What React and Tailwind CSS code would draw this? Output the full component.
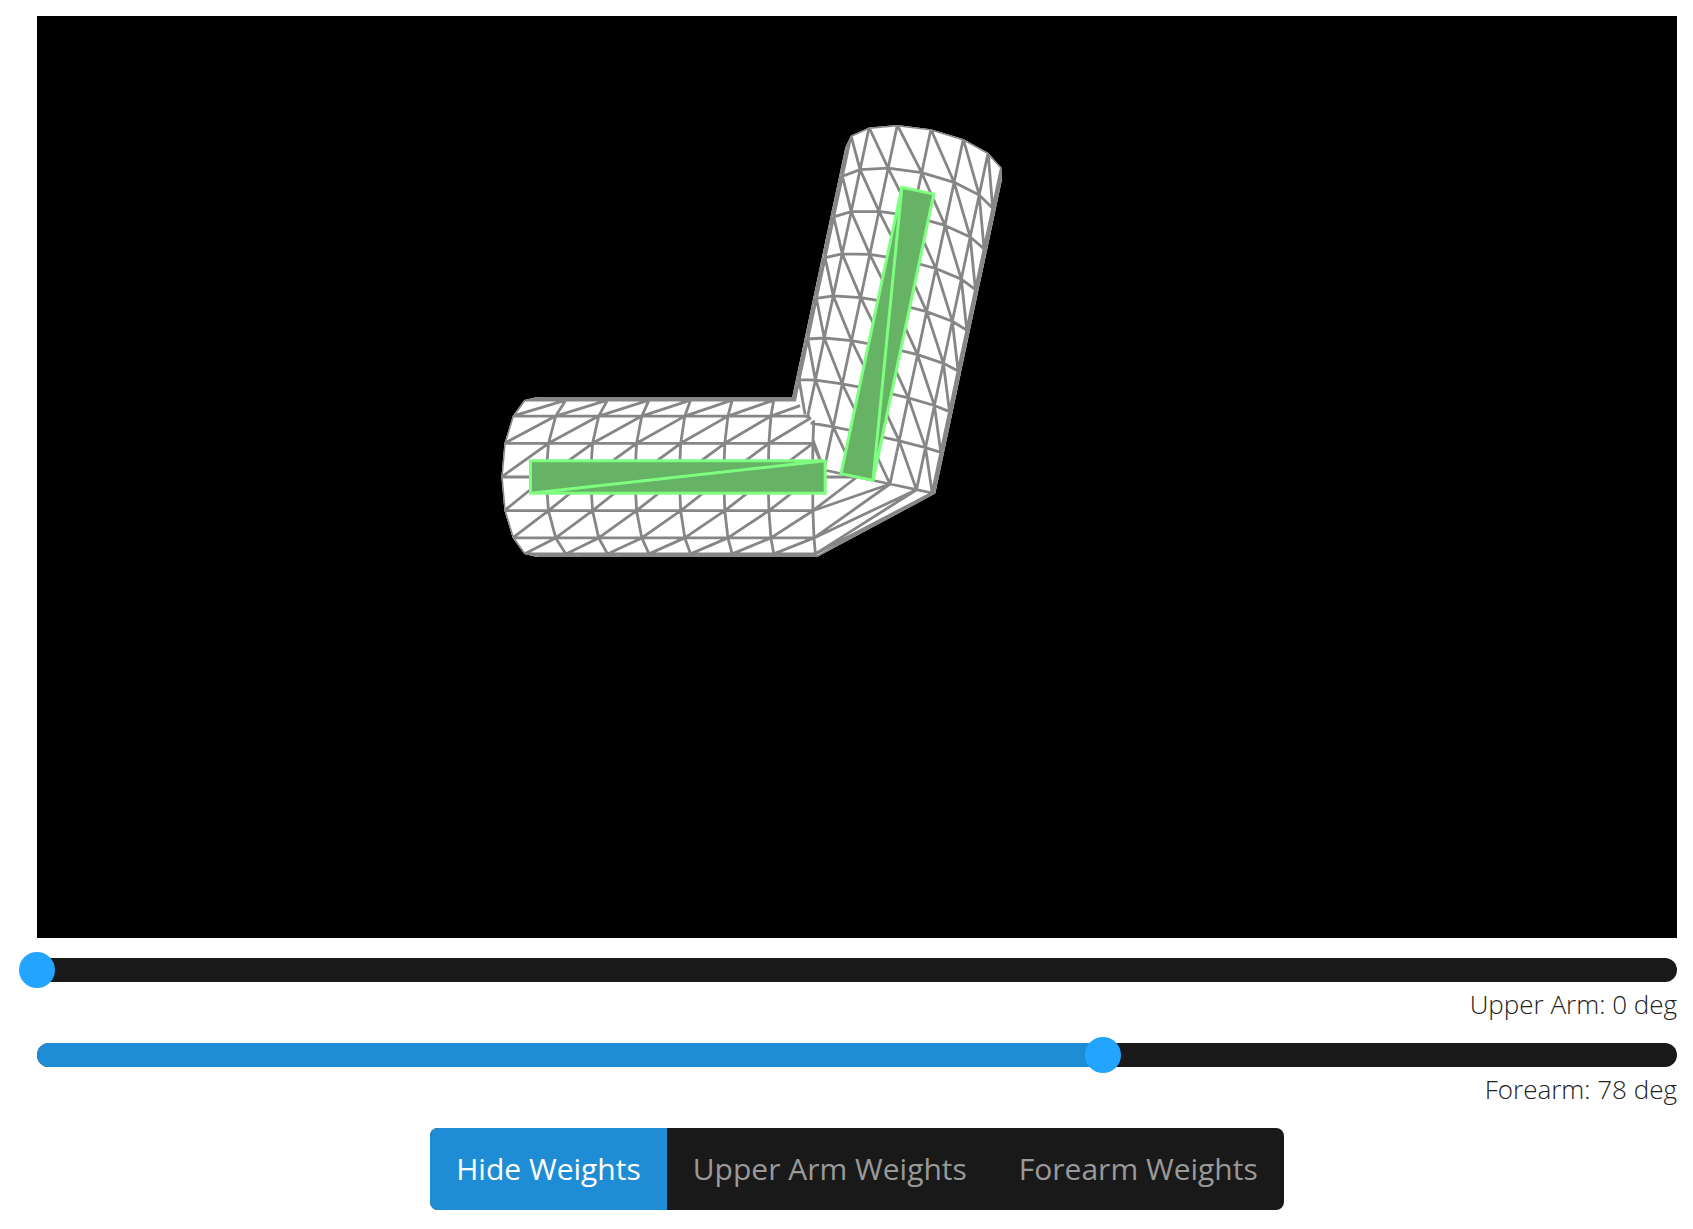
import { useId, useMemo, useState } from "react";

const RINGS = 16;
const SIDES = 16;
const RADIUS = 2;
const EYE = 20;
const VIEW_W = 1640;
const VIEW_H = 922;
const UNIT = 40;
const SAMPLES = 32;
const DEPTH_BIAS = 0.00012;

const rad = (deg) => (deg * Math.PI) / 180;

function rotate(x, y, deg) {
  const c = Math.cos(rad(deg));
  const s = Math.sin(rad(deg));
  return [x * c - y * s, x * s + y * c];
}

// Places a point of one bone's space in the scene.
function pose(bone, x, y, upper, forearm) {
  const [px, py] = bone === "forearm" ? rotate(x, y, forearm) : [x, y];
  const [qx, qy] = rotate(px + 8, py, upper);
  return [qx - 8, qy];
}

function project([x, y], z) {
  const w = 1 / (EYE - z);
  const k = UNIT * EYE * w;
  return { x: VIEW_W / 2 + x * k, y: VIEW_H / 2 - y * k, w };
}

function makeTriangle(a, b, c) {
  const area = (b.x - a.x) * (c.y - a.y) - (c.x - a.x) * (b.y - a.y);
  return {
    a,
    b,
    c,
    area,
    x0: Math.min(a.x, b.x, c.x),
    x1: Math.max(a.x, b.x, c.x),
    y0: Math.min(a.y, b.y, c.y),
    y1: Math.max(a.y, b.y, c.y),
  };
}

function hidden(x, y, w, triangles) {
  for (const t of triangles) {
    if (x < t.x0 || x > t.x1 || y < t.y0 || y > t.y1) continue;
    const { a, b, c } = t;
    const u = ((x - a.x) * (c.y - a.y) - (c.x - a.x) * (y - a.y)) / t.area;
    const v = ((b.x - a.x) * (y - a.y) - (x - a.x) * (b.y - a.y)) / t.area;
    if (u < 0 || v < 0 || u + v > 1) continue;
    if (a.w + u * (b.w - a.w) + v * (c.w - a.w) > w + DEPTH_BIAS) return true;
  }
  return false;
}

const pt = (x, y) => `${x.toFixed(1)} ${y.toFixed(1)}`;

function buildArm(upper, forearm) {
  const grid = [];
  for (let i = 0; i <= RINGS; i++) {
    const ring = [];
    for (let j = 0; j < SIDES; j++) {
      const angle = rad((j * 360) / SIDES);
      const bone = i >= 8 ? "forearm" : "upper";
      const place = pose(bone, i - 8, RADIUS * Math.sin(angle), upper, forearm);
      ring.push(project(place, RADIUS * Math.cos(angle)));
    }
    grid.push(ring);
  }

  const triangles = [];
  const edges = [];
  for (let i = 0; i <= RINGS; i++) {
    for (let j = 0; j < SIDES; j++) {
      const k = (j + 1) % SIDES;
      edges.push([grid[i][j], grid[i][k]]);
      if (i === RINGS) continue;
      edges.push([grid[i][j], grid[i + 1][j]], [grid[i][j], grid[i + 1][k]]);
      triangles.push(
        makeTriangle(grid[i][j], grid[i + 1][j], grid[i + 1][k]),
        makeTriangle(grid[i][j], grid[i + 1][k], grid[i][k])
      );
    }
  }
  const solid = triangles.filter((t) => Math.abs(t.area) > 0.01);

  let fill = "";
  for (const { a, b, c, area } of solid) {
    const [m, n] = area > 0 ? [b, c] : [c, b];
    fill += `M${pt(a.x, a.y)}L${pt(m.x, m.y)}L${pt(n.x, n.y)}Z`;
  }

  let wire = "";
  for (const [p, q] of edges) {
    let start = null;
    for (let s = 0; s <= SAMPLES; s++) {
      const drawn =
        s < SAMPLES &&
        !hidden(
          p.x + ((q.x - p.x) * (s + 0.5)) / SAMPLES,
          p.y + ((q.y - p.y) * (s + 0.5)) / SAMPLES,
          p.w + ((q.w - p.w) * (s + 0.5)) / SAMPLES,
          solid
        );
      if (drawn && start === null) start = s / SAMPLES;
      if (!drawn && start !== null) {
        const end = s / SAMPLES;
        wire += `M${pt(p.x + (q.x - p.x) * start, p.y + (q.y - p.y) * start)}`;
        wire += `L${pt(p.x + (q.x - p.x) * end, p.y + (q.y - p.y) * end)}`;
        start = null;
      }
    }
  }
  return { fill, wire };
}

function bonePath(bone, from, to, upper, forearm) {
  const h = 0.4;
  const corners = [
    [from, -h],
    [from, h],
    [to, h],
    [to, -h],
  ].map(([x, y]) => {
    const p = project(pose(bone, x, y, upper, forearm), h);
    return pt(p.x, p.y);
  });
  return `M${corners.join("L")}ZM${corners[0]}L${corners[2]}`;
}

function ArmView({ upper, forearm }) {
  const clip = useId();
  const { fill, wire } = useMemo(() => buildArm(upper, forearm), [upper, forearm]);
  return (
    <svg viewBox={`0 0 ${VIEW_W} ${VIEW_H}`} className="block h-full w-full" role="img" aria-label="Skinned arm">
      <clipPath id={clip}>
        <path d={fill} />
      </clipPath>
      <path d={fill} fill="#ffffff" />
      <path d={wire} fill="none" stroke="#868686" strokeWidth="2.8" clipPath={`url(#${clip})`} />
      <g fill="#66b366" stroke="#7fff7f" strokeWidth="3">
        <path d={bonePath("upper", -8, -0.78, upper, forearm)} />
        <path d={bonePath("forearm", 0, 7.17, upper, forearm)} />
      </g>
    </svg>
  );
}

function Slider({ label, max, value, onChange }) {
  const id = useId();
  return (
    <div className="mt-5">
      <div className="grid h-6 grid-rows-[24px] items-center">
        <div className="col-start-1 row-start-1 h-6 overflow-hidden rounded-full bg-[#191919]">
          <div className="h-full bg-[#1f8dd6]" style={{ width: `${(value / max) * 100}%` }} />
        </div>
        <input
          id={id}
          type="range"
          min="0"
          max={max}
          value={value}
          onChange={(e) => onChange(Number(e.target.value))}
          className="col-start-1 row-start-1 -mx-[18px] h-9 w-[calc(100%+36px)] cursor-pointer appearance-none bg-transparent [&::-webkit-slider-thumb]:size-9 [&::-webkit-slider-thumb]:appearance-none [&::-webkit-slider-thumb]:rounded-full [&::-webkit-slider-thumb]:bg-[#22a4ff]"
        />
      </div>
      <label htmlFor={id} className="block pt-[3px] text-right text-[26px] leading-[38px] font-light text-[#222222]">
        {label}: {value} deg
      </label>
    </div>
  );
}

const MODES = ["Hide Weights", "Upper Arm Weights", "Forearm Weights"];

export default function App() {
  const [upper, setUpper] = useState(0);
  const [forearm, setForearm] = useState(78);
  const [mode, setMode] = useState(MODES[0]);

  return (
    <main className="bg-white pt-4 pr-4 pb-4 pl-[37px] font-['Open_Sans',sans-serif]">
      <div className="aspect-[1640/922] bg-black">
        <ArmView upper={upper} forearm={forearm} />
      </div>
      <Slider label="Upper Arm" max={120} value={upper} onChange={setUpper} />
      <Slider label="Forearm" max={120} value={forearm} onChange={setForearm} />
      <div className="mt-5 flex justify-center">
        <div className="flex overflow-hidden rounded-lg bg-[#191919]">
          {MODES.map((name) => (
            <button
              key={name}
              type="button"
              aria-pressed={mode === name}
              onClick={() => setMode(name)}
              className={
                mode === name
                  ? "bg-[#1f8dd6] px-[26px] py-5 text-[30px] leading-[42px] text-white"
                  : "px-[26px] py-5 text-[30px] leading-[42px] text-[#999999]"
              }
            >
              {name}
            </button>
          ))}
        </div>
      </div>
    </main>
  );
}
